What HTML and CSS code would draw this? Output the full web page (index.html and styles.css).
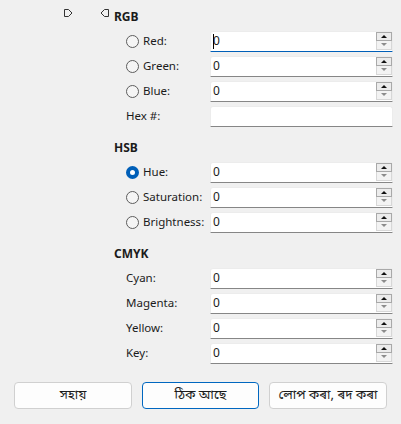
FILE: index.html
```html
<!DOCTYPE html>
<html>
<head>
<meta charset="utf-8">
<link rel="stylesheet" href="styles.css">
</head>
<body>
<div class="panel">
  <div class="head head-first">
    <svg class="marker m1" width="9" height="8" viewBox="0 0 9 8"><path d="M0.5 0.5H4.5L8 4L4.5 7.5H0.5Z" fill="none" stroke="#333" stroke-width="1"/></svg>
    <svg class="marker m2" width="9" height="8" viewBox="0 0 9 8"><path d="M8.5 0.5H4.5L1 4L4.5 7.5H8.5Z" fill="none" stroke="#333" stroke-width="1"/></svg>
    <span class="title">RGB</span>
  </div>
  <div class="rows">
    <div class="row"><label class="lbl"><span class="radio"></span>Red:</label><div class="field focus"><span class="caret"></span><span class="val">0</span><div class="spin"><span class="up"></span><span class="down"></span></div></div></div>
    <div class="row"><label class="lbl"><span class="radio"></span>Green:</label><div class="field"><span class="val">0</span><div class="spin"><span class="up"></span><span class="down"></span></div></div></div>
    <div class="row"><label class="lbl"><span class="radio"></span>Blue:</label><div class="field"><span class="val">0</span><div class="spin"><span class="up"></span><span class="down"></span></div></div></div>
    <div class="row"><label class="lbl">Hex #:</label><div class="field"><span class="val"></span></div></div>
  </div>

  <div class="head"><span class="title">HSB</span></div>
  <div class="rows">
    <div class="row"><label class="lbl"><span class="radio on"></span>Hue:</label><div class="field"><span class="val">0</span><div class="spin"><span class="up"></span><span class="down"></span></div></div></div>
    <div class="row"><label class="lbl"><span class="radio"></span>Saturation:</label><div class="field"><span class="val">0</span><div class="spin"><span class="up"></span><span class="down"></span></div></div></div>
    <div class="row"><label class="lbl"><span class="radio"></span>Brightness:</label><div class="field"><span class="val">0</span><div class="spin"><span class="up"></span><span class="down"></span></div></div></div>
  </div>

  <div class="head"><span class="title">CMYK</span></div>
  <div class="rows last">
    <div class="row"><label class="lbl">Cyan:</label><div class="field"><span class="val">0</span><div class="spin"><span class="up"></span><span class="down"></span></div></div></div>
    <div class="row"><label class="lbl">Magenta:</label><div class="field"><span class="val">0</span><div class="spin"><span class="up"></span><span class="down"></span></div></div></div>
    <div class="row"><label class="lbl">Yellow:</label><div class="field"><span class="val">0</span><div class="spin"><span class="up"></span><span class="down"></span></div></div></div>
    <div class="row"><label class="lbl">Key:</label><div class="field"><span class="val">0</span><div class="spin"><span class="up"></span><span class="down"></span></div></div></div>
  </div>
</div>
<div class="buttons">
  <button class="btn">সহায়</button>
  <button class="btn default">ঠিক আছে</button>
  <button class="btn">লোপ কৰা, ৰদ কৰা</button>
</div>
</body>
</html>
```

FILE: styles.css
```css
html, body {
  margin: 0;
  padding: 0;
  background: #f0f0f0;
  width: 401px;
  height: 424px;
  overflow: hidden;
}
body {
  font-family: "Noto Sans", "Noto Sans Bengali", "Liberation Sans", sans-serif;
  font-size: 11.5px;
  color: #1b1b1b;
}
.panel {
  padding-top: 9px;
}
.head {
  display: flex;
  height: 16px;
  align-items: center;
  padding-left: 114px;
  margin-bottom: 6px;
}
.head-first {
  padding-left: 64px;
}
.marker {
  display: block;
  align-self: flex-start;
}
.m1 { margin-right: 27px; }
.m2 { margin-right: 5px; }
.title {
  font-weight: bold;
  font-size: 12px;
  line-height: 16px;
}
.rows {
  display: flex;
  flex-direction: column;
  gap: 5px;
  margin-bottom: 14px;
}
.rows.last {
  margin-bottom: 19px;
}
.row {
  display: flex;
  align-items: center;
  height: 20px;
  padding-left: 126px;
}
.lbl {
  width: 84px;
  display: flex;
  align-items: center;
  line-height: 16px;
}
.radio {
  width: 11px;
  height: 11px;
  border: 1px solid #5d5d5d;
  border-radius: 50%;
  background: #f5f5f5;
  margin-right: 4px;
  flex: none;
}
.radio.on {
  width: 5px;
  height: 5px;
  border: 4px solid #005fb8;
  background: #ffffff;
}
.field {
  width: 179px;
  height: 19px;
  background: #ffffff;
  border: 1px solid #ececec;
  border-bottom: 1px solid #868686;
  border-radius: 3px 3px 0 0;
  display: flex;
  align-items: center;
  padding-left: 2px;
}
.field.focus {
  border-bottom-color: #005fb8;
}
.caret {
  width: 1px;
  height: 15px;
  background: #000;
  margin-right: -1px;
  position: relative;
  z-index: 1;
}
.val {
  flex: 1;
  line-height: 16px;
  font-size: 12px;
}
.spin {
  display: flex;
  flex-direction: column;
  margin-right: 0;
  align-self: flex-start;
}
.spin span {
  width: 14px;
  height: 7px;
  display: flex;
  align-items: center;
  justify-content: center;
}
.up {
  border: 1px solid #a9a9a9;
  background: #ececec;
}
.down {
  border: 1px solid #d7d7d7;
  border-top: none;
  background: #f3f3f3;
  height: 8px !important;
}
.up::after {
  content: "";
  border-left: 3px solid transparent;
  border-right: 3px solid transparent;
  border-bottom: 3px solid #111;
}
.down::after {
  content: "";
  border-left: 3px solid transparent;
  border-right: 3px solid transparent;
  border-top: 3px solid #8c8c8c;
}
.buttons {
  display: flex;
  gap: 10px;
  padding-left: 14px;
}
.btn {
  width: 118px;
  height: 27px;
  background: #fdfdfd;
  border: 1px solid #d0d0d0;
  border-radius: 4px;
  font-family: "Noto Sans Bengali", "Noto Sans", "Liberation Sans", sans-serif;
  font-size: 13px;
  color: #1b1b1b;
  padding: 0;
  line-height: 16px;
}
.btn.default {
  width: 117px;
  border-color: #0067c0;
}
```
